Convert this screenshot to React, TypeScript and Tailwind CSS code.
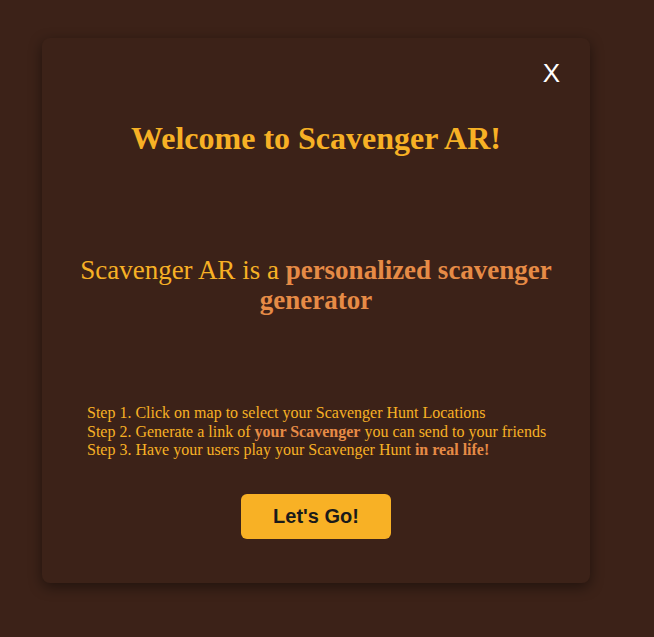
import React from "react";

export default function App() {
  return (
    <div className="w-[654px] h-[637px] bg-[#3c2218] pt-[38px] pl-[42px]" style={{ fontFamily: '"Liberation Serif", serif' }}>
      <div className="relative w-[548px] h-[545px] rounded-lg bg-[#3c2218] shadow-[0_4px_14px_rgba(0,0,0,0.45)] flex flex-col items-center">
        <button className="absolute right-[30px] top-[22px] text-white text-[26px] leading-none" style={{ fontFamily: '"Liberation Sans", sans-serif' }}>
          X
        </button>
        <h1 className="mt-[81px] text-[#f7b125] text-[32px] font-bold leading-[38px]">Welcome to Scavenger AR!</h1>
        <p className="mt-[98px] text-[#f7b125] text-[27px] leading-[30px] text-center px-[20px]">
          Scavenger AR is a <b className="text-[#e68b46]">personalized scavenger generator</b>
        </p>
        <div className="mt-[89px] self-start ml-[45px] text-[#f7b125] text-[16px] leading-[18.5px]">
          <div>Step 1. Click on map to select your Scavenger Hunt Locations</div>
          <div>
            Step 2. Generate a link of <b className="text-[#e68b46]">your Scavenger</b> you can send to your friends
          </div>
          <div>
            Step 3. Have your users play your Scavenger Hunt <b className="text-[#e68b46]">in real life!</b>
          </div>
        </div>
        <button className="mt-[34px] w-[150px] h-[45px] rounded-md bg-[#f8b125] text-[#1a1a1a] text-[20px] font-bold" style={{ fontFamily: '"Liberation Sans", sans-serif' }}>
          Let's Go!
        </button>
      </div>
    </div>
  );
}
